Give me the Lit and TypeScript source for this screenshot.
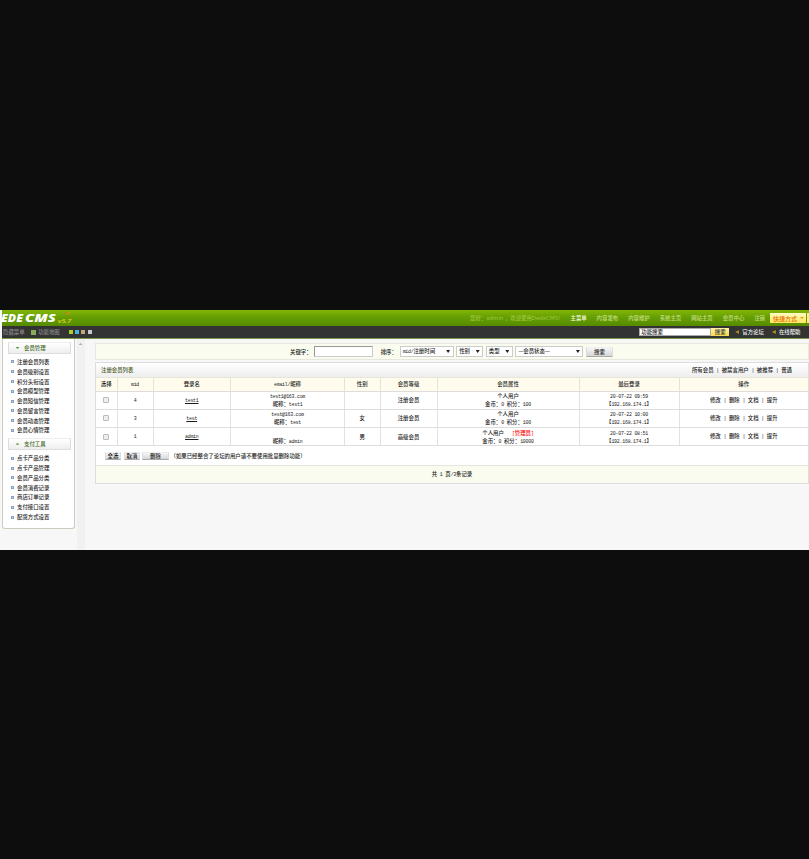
import { LitElement, html, css } from "lit";
import { customElement } from "lit/decorators.js";

/** Wraps half-width runs so they take exactly half of a CJK glyph's advance. */
const t = (s: string) =>
  s.split(/([\x20-\x7e]+)/).map((p, i) => (i % 2 ? html`<span class="h">${p}</span>` : p));

const memberMenu = ["注册会员列表", "会员级别设置", "积分头衔设置", "会员模型管理", "会员短信管理", "会员留言管理", "会员动态管理", "会员心情管理"];
const payMenu = ["点卡产品分类", "点卡产品管理", "会员产品分类", "会员消费记录", "商店订单记录", "支付接口设置", "配货方式设置"];
const topLinks = ["主菜单", "内容发布", "内容维护", "系统主页", "网站主页", "会员中心", "注销"];
const heads = ["选择", "mid", "登录名", "email/昵称", "性别", "会员等级", "会员属性", "最后登录", "操作"];
const rows = [
  { mid: "4", login: "test1", mail: "test1@163.com", sex: "", rank: "注册会员", admin: false, score: "100", time: "20-07-22 09:59" },
  { mid: "3", login: "test", mail: "test@163.com", sex: "女", rank: "注册会员", admin: false, score: "100", time: "20-07-22 10:00" },
  { mid: "1", login: "admin", mail: "", sex: "男", rank: "高级会员", admin: true, score: "10000", time: "20-07-22 08:51" },
];

@customElement("app-root")
export class AppRoot extends LitElement {
  static styles = css`
    :host { display: flex; flex-direction: column; width: 809px; height: 859px; overflow: hidden; background: #0d0d0d; padding-top: 310px; box-sizing: border-box;
      font: 500 5.42px/10px "Noto Sans CJK SC", sans-serif; color: #1c1c1c; white-space: nowrap; }
    * { box-sizing: border-box; }
    i { display: block; flex: none; }
    .h { font-family: "Liberation Mono", monospace; font-size: 4.9px; letter-spacing: -0.23px; white-space: pre; }
    .page { height: 240px; background: #f7f7f7; flex: none; overflow: hidden; }
    .top { height: 16px; margin-left: 2px; display: flex; align-items: center; background: linear-gradient(#84b606, #659f04 45%, #568a02); color: #c4de7e; position: relative; }
    .logo { width: 80px; height: 16px; flex: none; }
    .logo text { font-family: "Open Sans", sans-serif; font-style: italic; font-weight: 800; }
    .logo .ver { font-weight: 600; }
    .hello { margin-left: 388px; width: 100.5px; color: #a0c83e; }
    .hello .h { font-family: "DejaVu Sans", sans-serif; font-size: 5.4px; letter-spacing: 0; }
    .nav { display: flex; gap: 9.9px; }
    .nav :first-child { color: #f4fadc; }
    .quick { position: absolute; right: 3px; top: 3px; width: 36px; height: 10px; background: linear-gradient(#fffcc4, #ffe75e); color: #e56a00; padding-left: 3px; line-height: 9px; font-size: 6px; display: flex; align-items: center; gap: 3px; }
    .quick::after { content: ""; position: absolute; left: 37px; top: 0; width: 2px; height: 10px; background: #ffef80; }
    .tri { width: 4px; height: 2px; background: #f09a20; clip-path: polygon(0 0, 100% 0, 50% 100%); }
    .bar { height: 13px; margin-left: 2px; background: #333; border-bottom: 1px solid #79964a; display: flex; align-items: center; color: #858585; padding-left: 1px; }
    .swatches { display: flex; gap: 2.3px; width: 579.5px; padding-left: 9px; flex: none; }
    .sq { width: 4px; height: 4px; }
    .c0 { background: #b0cf2a; } .c1 { background: #49b5dd; } .c2 { background: #c2a878; } .c3 { background: #c8ccd0; }
    .mapi { width: 5px; height: 5px; background: #87ad5c; margin: 0 2.5px 0 6px; }
    .fs { width: 72px; height: 8px; background: #fff; border: 1px solid #aaa; color: #222; line-height: 6px; padding-left: 1px; flex: none; }
    .fb { width: 18px; height: 8px; background: linear-gradient(#fff6a6, #f5d94b); color: #333; text-align: center; line-height: 8px; flex: none; }
    .arr { width: 4px; height: 4px; background: #b08c20; clip-path: polygon(100% 0, 100% 100%, 0 50%); margin: 0 3px 0 6px; }
    .arr + .w + .arr { margin-left: 8px; }
    .w { color: #eee; }
    .main { display: flex; height: 211px; }
    .side { width: 73px; height: 190px; margin-left: 2px; background: #fff; border: 1px solid #ccccbe; border-top: 0; border-radius: 0 0 3px 3px; padding: 3px 3px 0 5px; }
    .group { height: 12px; width: 63px; border: 1px solid #ddd; border-top-color: #eee; background: linear-gradient(#fff, #eee); color: #3f6a25; line-height: 10px; display: flex; align-items: center; gap: 4.5px; padding-left: 6.5px; }
    .group .tri { background: #5a9e3c; }
    .list { padding: 3px 0 3px 3px; }
    .item { height: 9.81px; display: flex; align-items: center; gap: 3px; }
    .dot { width: 3px; height: 3px; border: 1px solid #7fa2cc; background: #cfdef0; }
    .scroll { width: 8px; margin-left: 1.5px; background: #f1f1f1; padding: 4px 2px; }
    .up { width: 4px; height: 2px; background: #aaa; clip-path: polygon(50% 0, 100% 100%, 0 100%); }
    .body { margin-left: 10.5px; width: 714px; padding-top: 4px; flex: none; }
    .search { height: 17px; background: #f9fcee; border: 1px solid #e6e8e0; display: flex; align-items: center; padding-left: 194px; }
    .kw { width: 59px; height: 11px; border: 1px solid #ccc; border-top-color: #999; border-left-color: #999; background: #fff; margin: 0 8px 0 2px; flex: none; }
    .sel { height: 11px; background: #fff; border: 1px solid #ccc; display: flex; align-items: center; justify-content: space-between; padding: 0 2.5px 0 2px; margin-right: 2.6px; line-height: 9px; }
    .sel .tri { height: 3px; background: #222; }
    .lead { margin-left: -2px; width: 21px; padding-left: 2px; }
    .btn { background: linear-gradient(#f6f6f6, #d6d6d6); border: 1px solid #ddd; border-top-color: #eee; border-bottom-color: #aaa; text-align: center; }
    .s { width: 27px; height: 10px; line-height: 8px; }
    .panel { margin-top: 2px; border: 1px solid #ddd; background: #fff; }
    .title { height: 14px; background: linear-gradient(#fff, #eee); display: flex; justify-content: space-between; align-items: center; padding: 0 16px 0 5px; }
    .title b { color: #4b5a26; font-weight: 500; }
    .row { display: grid; grid-template-columns: 21.5px 36px 77.5px 114px 35.5px 57px 142px 100px 1fr; height: 18.3px; border-bottom: 1px solid #ddd; }
    .row > div { border-right: 1px solid #e2e2e2; display: flex; flex-direction: column; align-items: center; justify-content: center; line-height: 8.2px; }
    .row > div:last-child { border-right: 0; }
    .row.head { height: 14.5px; background: #fffcee; border-top: 1px solid #e8e6d8; }
    .line { height: 8.2px; }
    .cb { width: 6px; height: 6px; border: 1px solid #bbb; border-radius: 1px; background: #eee; }
    .u { text-decoration: underline; text-decoration-thickness: 0.6px; }
    .red { color: #f00; }
    .acts { height: 18.3px; display: flex; align-items: center; padding-left: 9px; }
    .acts .btn { height: 8px; line-height: 6px; margin-right: 3px; width: 16px; }
    .acts .wide { width: 27px; margin-right: 1.5px; margin-left: -1px; }
    .foot { height: 18px; background: #f9fcee; border-top: 1px solid #e4e6dc; text-align: center; line-height: 17px; }
  `;

  private menu(title: string, items: string[]) {
    return html`<div class="group"><i class="tri"></i>${title}</div>
      <div class="list">${items.map((i) => html`<div class="item"><i class="dot"></i>${i}</div>`)}</div>`;
  }

  private select(label: string, width: string) {
    return html`<div class="sel" style="width:${width}"><span>${t(label)}</span><i class="tri"></i></div>`;
  }

  private member(r: (typeof rows)[number]) {
    return html`<div class="row">
      <div><i class="cb"></i></div>
      <div><span>${t(r.mid)}</span></div>
      <div><span class="u">${t(r.login)}</span></div>
      <div><div class="line">${t(r.mail)}</div><div class="line">${t("昵称：" + r.login)}</div></div>
      <div>${r.sex}</div>
      <div>${r.rank}</div>
      <div><div class="line">个人用户${r.admin ? html`<span class="h">   </span><span class="red">${t("[管理员]")}</span>` : ""}</div><div class="line">${t("金币：0 积分：" + r.score)}</div></div>
      <div><div class="line">${t(r.time)}</div><div class="line">${t("【192.168.174.1】")}</div></div>
      <div><span>${t("修改 | 删除 | 文档 | 提升")}</span></div>
    </div>`;
  }

  render() {
    return html`<div class="page">
      <div class="top">
        <svg class="logo" viewBox="0 0 80 16"><text x="-1" y="12.3" font-size="9.6" fill="#fff" textLength="22" lengthAdjust="spacingAndGlyphs">EDE</text><text x="23" y="12.3" font-size="9.6" fill="#fff" textLength="31" lengthAdjust="spacingAndGlyphs">CMS</text><text class="ver" x="56" y="13" font-size="6" fill="#e2d52e" textLength="13" lengthAdjust="spacingAndGlyphs">v5.7</text><text class="ver" x="63" y="5" font-size="3" fill="#e07b1c">SP2</text></svg>
        <div class="hello">${t("您好：admin ，欢迎使用DedeCMS!")}</div>
        <div class="nav">${topLinks.map((l) => html`<span>${l}</span>`)}</div>
        <div class="quick">快捷方式<i class="tri"></i></div>
      </div>
      <div class="bar"><span>隐藏菜单</span><i class="mapi"></i><span>功能地图</span>
        <div class="swatches">${[0, 1, 2, 3].map((n) => html`<i class="sq c${n}"></i>`)}</div>
        <div class="fs">功能搜索</div><div class="fb">搜索</div><i class="arr"></i><span class="w">官方论坛</span><i class="arr"></i><span class="w">在线帮助</span></div>
      <div class="main">
        <div class="side">${this.menu("会员管理", memberMenu)}${this.menu("支付工具", payMenu)}</div>
        <div class="scroll"><div class="up"></div></div>
        <div class="body">
          <div class="search">关键字：<div class="kw"></div><span class="lead">排序：</span>${this.select("mid/注册时间", "54px")}${this.select("性别", "27px")}${this.select("类型", "27px")}${this.select("—会员状态—", "68px")}<div class="btn s">搜索</div></div>
          <div class="panel">
            <div class="title"><b>注册会员列表</b><span>${t("所有会员 | 被禁言用户 | 被推荐 | 普通")}</span></div>
            <div class="row head">${heads.map((h) => html`<div><span>${t(h)}</span></div>`)}</div>
            ${rows.map((r) => this.member(r))}
            <div class="acts"><div class="btn">全选</div><div class="btn">取消</div><div class="btn wide">删除</div><span>（如果已经整合了论坛的用户请不要使用批量删除功能）</span></div>
            <div class="foot">${t("共 1 页/3条记录")}</div>
          </div>
        </div>
      </div>
    </div>`;
  }
}
